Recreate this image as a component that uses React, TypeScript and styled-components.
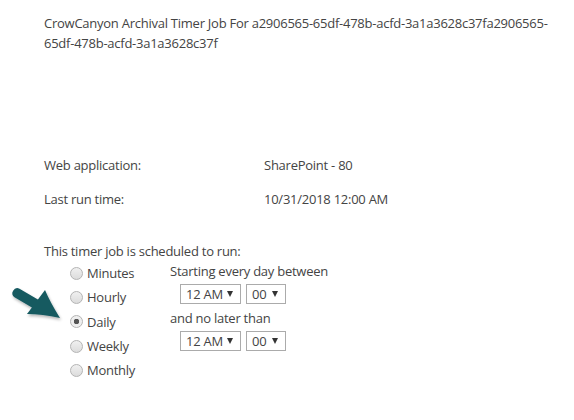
import React from 'react';
import styled, { createGlobalStyle } from 'styled-components';

const GlobalStyle = createGlobalStyle`
  body {
    margin: 0;
    background: #fff;
    font-family: "Open Sans", "Liberation Sans", sans-serif;
    font-size: 13px;
    letter-spacing: -0.25px;
    color: #444;
  }
`;

const windows = [
  { caption: 'Starting every day between', hour: '12 AM', minute: '00' },
  { caption: 'and no later than', hour: '12 AM', minute: '00' },
];

const schedules = ['Minutes', 'Hourly', 'Daily', 'Weekly', 'Monthly'];

export default function App() {
  return (
    <>
      <GlobalStyle />
      <Page>
        <Title>
          CrowCanyon Archival Timer Job For a2906565-65df-478b-acfd-3a1a3628c37fa2906565-65df-478b-acfd-3a1a3628c37f
        </Title>
        <Properties>
          <div>Web application:</div>
          <div>SharePoint - 80</div>
          <div>Last run time:</div>
          <div>10/31/2018 12:00 AM</div>
        </Properties>
        <Schedule>
          <Pointer viewBox="0 0 72 46" width="72" height="46">
            <defs>
              <filter id="shadow" x="-30%" y="-30%" width="170%" height="170%">
                <feGaussianBlur in="SourceAlpha" stdDeviation="1.6" />
                <feOffset dx="1" dy="2" />
                <feComponentTransfer>
                  <feFuncA type="linear" slope="0.3" />
                </feComponentTransfer>
                <feMerge>
                  <feMergeNode />
                  <feMergeNode in="SourceGraphic" />
                </feMerge>
              </filter>
            </defs>
            <path
              d="M19.5 8.7 L37.9 19.4 L45 10 Q50 22 60 38 Q42 34 27 34 L31.9 27.4 L14.5 17.3 A5 5 0 0 1 19.5 8.7 Z"
              fill="#175a61"
              filter="url(#shadow)"
            />
          </Pointer>
          <Heading>This timer job is scheduled to run:</Heading>
          <ScheduleGrid>
            <RadioList>
              {schedules.map((s) => (
                <RadioRow key={s}>
                  <Radio checked={s === 'Daily'} />
                  {s}
                </RadioRow>
              ))}
            </RadioList>
            <Window>
              {windows.map((w) => (
                <React.Fragment key={w.caption}>
                  <WindowText>{w.caption}</WindowText>
                  <SelectRow>
                    <Select width={61}>
                      {w.hour}
                      <Caret />
                    </Select>
                    <Select width={40}>
                      {w.minute}
                      <Caret />
                    </Select>
                  </SelectRow>
                </React.Fragment>
              ))}
            </Window>
          </ScheduleGrid>
        </Schedule>
      </Page>
    </>
  );
}

const Page = styled.div`
  padding: 13px 0 0 44px;
`;

const Title = styled.div`
  width: 512px;
  line-height: 20px;
`;

const Properties = styled.div`
  display: grid;
  grid-template-columns: 220px auto;
  grid-auto-rows: 34px;
  margin-top: 102px;
  line-height: 20px;
`;

const Schedule = styled.div`
  position: relative;
  margin-top: 18px;
`;

const Pointer = styled.svg`
  position: absolute;
  left: -44px;
  top: 39px;
  overflow: visible;
`;

const Heading = styled.div`
  line-height: 20px;
`;

const ScheduleGrid = styled.div`
  display: flex;
  padding-left: 26px;
`;

const RadioList = styled.div`
  width: 100px;
  display: flex;
  flex-direction: column;
`;

const RadioRow = styled.label`
  display: flex;
  align-items: center;
  height: 24.3px;
  gap: 4px;
`;

const Radio = styled.span<{ checked?: boolean }>`
  width: 11px;
  height: 11px;
  border-radius: 50%;
  border: 1px solid #b4b4b4;
  background: ${(p) =>
    p.checked
      ? 'radial-gradient(circle, #555 0, #555 2.5px, #ececec 3px, #f4f4f4 100%)'
      : 'linear-gradient(#f0f0f0, #dcdcdc)'};
  box-sizing: content-box;
  flex: none;
`;

const Window = styled.div`
  display: flex;
  flex-direction: column;
`;

const WindowText = styled.div`
  line-height: 20px;
`;

const SelectRow = styled.div`
  display: flex;
  gap: 5px;
  margin: 3px 0 4px 10px;
`;

const Select = styled.div<{ width: number }>`
  width: ${(p) => p.width}px;
  height: 20px;
  box-sizing: border-box;
  border: 1px solid #ababab;
  display: flex;
  align-items: center;
  justify-content: space-between;
  padding: 0 7px 0 5px;
  color: #444;
  line-height: 18px;
`;

const Caret = styled.span`
  width: 0;
  height: 0;
  margin-top: -1px;
  border-left: 3px solid transparent;
  border-right: 3px solid transparent;
  border-top: 6px solid #333;
`;
